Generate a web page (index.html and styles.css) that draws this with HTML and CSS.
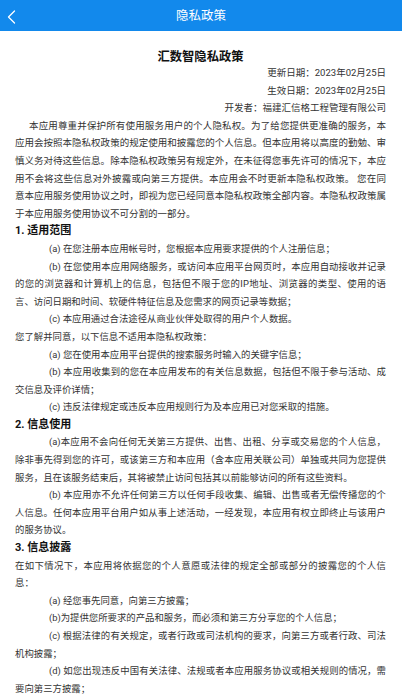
FILE: index.html
```html
<!DOCTYPE html>
<html lang="zh-CN">
<head>
<meta charset="utf-8">
<title>隐私政策</title>
<link rel="stylesheet" href="styles.css">
</head>
<body>
<header class="nav">
  <span class="nav-back">
    <svg width="9" height="14" viewBox="0 0 9 14"><path d="M7.5 1 L1.5 7 L7.5 13" fill="none" stroke="#fff" stroke-width="1.3" stroke-linecap="round" stroke-linejoin="round"/></svg>
  </span>
  <h1 class="nav-title">隐私政策</h1>
</header>
<main class="doc">
  <h2 class="doc-title">汇数智隐私政策</h2>
  <p class="meta">更新日期：2023年02月25日</p>
  <p class="meta">生效日期：2023年02月25日</p>
  <p class="meta">开发者：福建汇信格工程管理有限公司</p>
  <p class="para lead">本应用尊重并保护所有使用服务用户的个人隐私权。为了给您提供更准确的服务，本应用会按照本隐私权政策的规定使用和披露您的个人信息。但本应用将以高度的勤勉、审慎义务对待这些信息。除本隐私权政策另有规定外，在未征得您事先许可的情况下，本应用不会将这些信息对外披露或向第三方提供。本应用会不时更新本隐私权政策。 您在同意本应用服务使用协议之时，即视为您已经同意本隐私权政策全部内容。本隐私权政策属于本应用服务使用协议不可分割的一部分。</p>
  <h3 class="sec">1. 适用范围</h3>
  <p class="para item">(a) 在您注册本应用帐号时，您根据本应用要求提供的个人注册信息；</p>
  <p class="para item">(b) 在您使用本应用网络服务，或访问本应用平台网页时，本应用自动接收并记录的您的浏览器和计算机上的信息，包括但不限于您的IP地址、浏览器的类型、使用的语言、访问日期和时间、软硬件特征信息及您需求的网页记录等数据；</p>
  <p class="para item">(c) 本应用通过合法途径从商业伙伴处取得的用户个人数据。</p>
  <p class="para">您了解并同意，以下信息不适用本隐私权政策：</p>
  <p class="para item">(a) 您在使用本应用平台提供的搜索服务时输入的关键字信息；</p>
  <p class="para item">(b) 本应用收集到的您在本应用发布的有关信息数据，包括但不限于参与活动、成交信息及评价详情；</p>
  <p class="para item">(c) 违反法律规定或违反本应用规则行为及本应用已对您采取的措施。</p>
  <h3 class="sec">2. 信息使用</h3>
  <p class="para item">(a)本应用不会向任何无关第三方提供、出售、出租、分享或交易您的个人信息，除非事先得到您的许可，或该第三方和本应用（含本应用关联公司）单独或共同为您提供服务，且在该服务结束后，其将被禁止访问包括其以前能够访问的所有这些资料。</p>
  <p class="para item">(b) 本应用亦不允许任何第三方以任何手段收集、编辑、出售或者无偿传播您的个人信息。任何本应用平台用户如从事上述活动，一经发现，本应用有权立即终止与该用户的服务协议。</p>
  <h3 class="sec">3. 信息披露</h3>
  <p class="para">在如下情况下，本应用将依据您的个人意愿或法律的规定全部或部分的披露您的个人信息：</p>
  <p class="para item">(a) 经您事先同意，向第三方披露；</p>
  <p class="para item">(b)为提供您所要求的产品和服务，而必须和第三方分享您的个人信息；</p>
  <p class="para item">(c) 根据法律的有关规定，或者行政或司法机构的要求，向第三方或者行政、司法机构披露；</p>
  <p class="para item">(d) 如您出现违反中国有关法律、法规或者本应用服务协议或相关规则的情况，需要向第三方披露；</p>
</main>
</body>
</html>
```

FILE: styles.css
```css
html, body {
  margin: 0;
  padding: 0;
  background: #ffffff;
}
body {
  font-family: Roboto, "Noto Sans CJK SC", sans-serif;
  color: #333333;
}
.nav {
  height: 31px;
  background: #1289ec;
  display: flex;
  align-items: center;
  justify-content: center;
  position: relative;
}
.nav-back {
  position: absolute;
  left: 7px;
  top: 10px;
  display: flex;
}
.nav-title {
  margin: 0;
  font-size: 12.5px;
  font-weight: 400;
  color: #ffffff;
  line-height: 31px;
}
.doc {
  padding: 19px 16px 20px 15px;
}
.doc-title {
  margin: 0;
  text-align: center;
  font-size: 12.3px;
  font-weight: 700;
  color: #111111;
  line-height: 14px;
}
.meta {
  margin: 0;
  text-align: right;
  font-size: 9.5px;
  line-height: 17.6px;
}
.para {
  margin: 0;
  font-size: 9.4px;
  line-height: 17.6px;
  text-align: justify;
}
.lead {
  font-size: 9.5px;
  text-indent: 14px;
}
.item {
  text-indent: 34px;
}
.sec {
  margin: 0;
  font-size: 11px;
  font-weight: 700;
  color: #111111;
  line-height: 17.6px;
}
```
